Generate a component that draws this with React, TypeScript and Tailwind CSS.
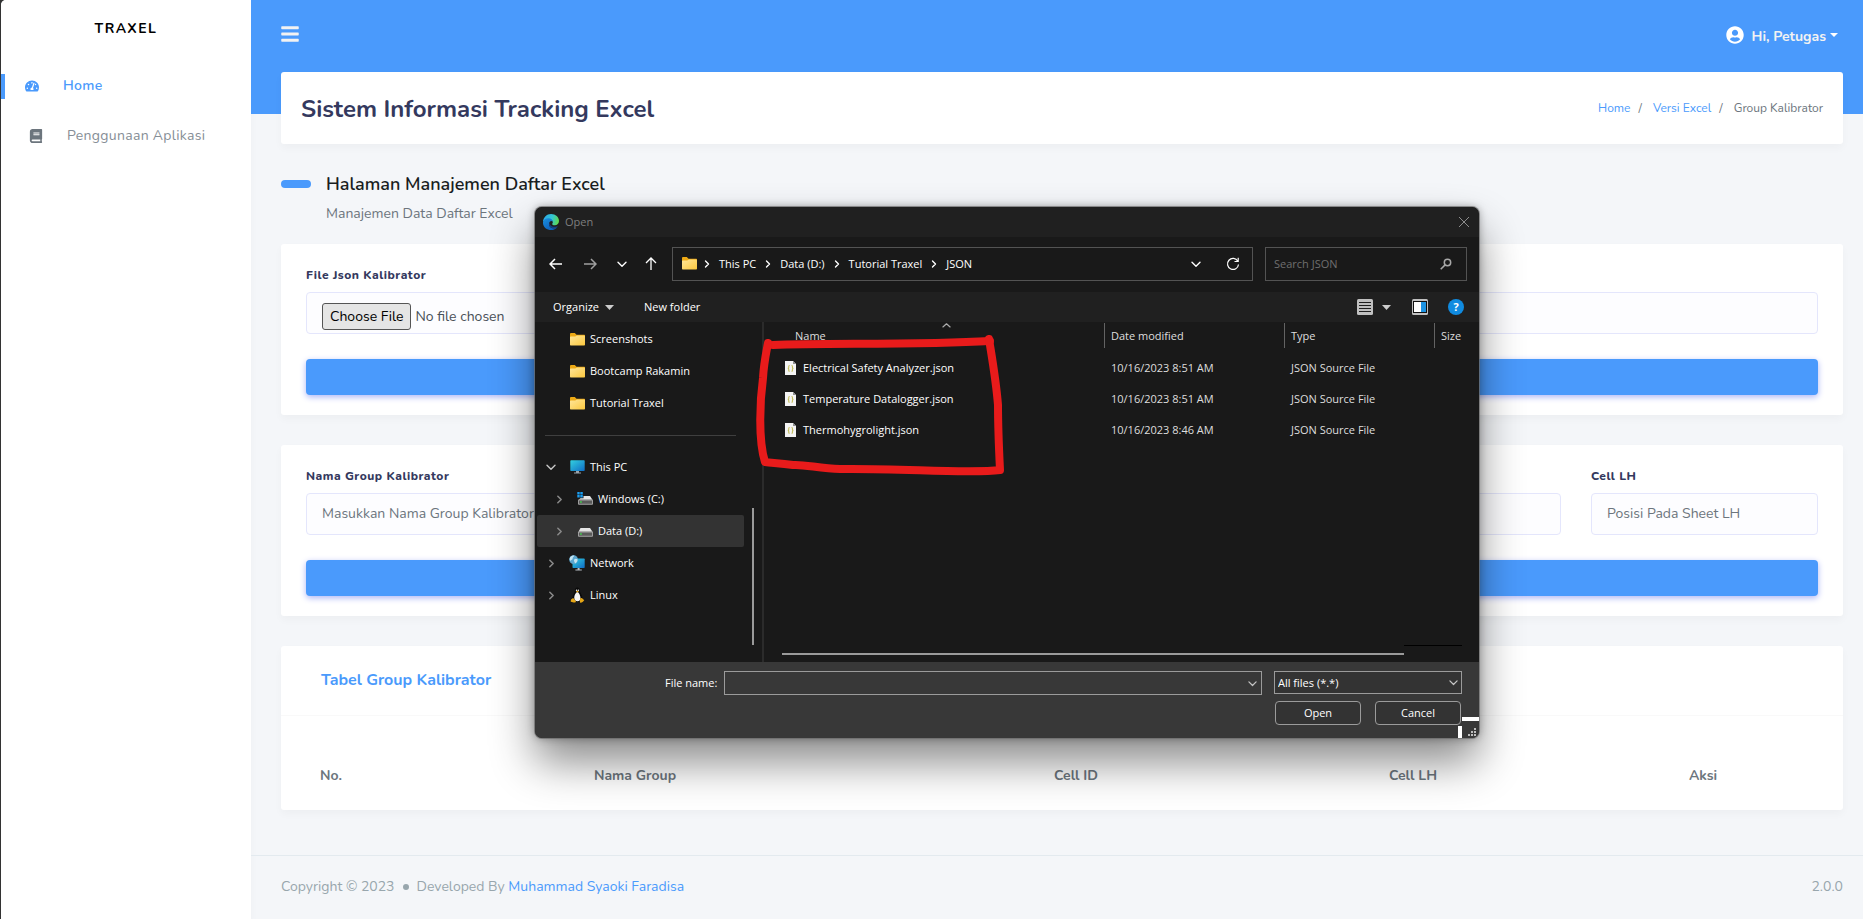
import React from 'react';
import { FaBars, FaBook, FaTachometerAlt, FaUserCircle } from 'react-icons/fa';

const label = 'block text-xs font-extrabold leading-6 tracking-[0.5px] text-[#34395e]';
const field =
  'block h-[42px] w-full rounded-[4px] border border-[#e4e6fc] bg-[#fdfdff] px-[15px] text-sm text-[#495057] outline-none placeholder:text-[#6c757d]';
const card = 'rounded-[3px] bg-white shadow-[0_4px_8px_rgba(0,0,0,0.03)]';
const primary =
  'mt-[25px] block h-9 w-full rounded-[4px] bg-[#4a9afc] shadow-[0_2px_6px_#acb5f6]';

function Chevron({ className, d }: { className: string; d: string }) {
  return (
    <svg className={className} viewBox="0 0 10 10" fill="none" stroke="currentColor" strokeWidth="1.4" strokeLinecap="round" strokeLinejoin="round">
      <path d={d} />
    </svg>
  );
}
const RIGHT = 'M3.5 2 6.5 5 3.5 8';
const DOWN = 'M1 3.2 5 7.2 9 3.2';

function EdgeLogo() {
  return (
    <svg className="size-4" viewBox="0 0 16 16">
      <defs>
        <linearGradient id="edgeTop" x1="0" y1="0.3" x2="1" y2="0.5">
          <stop offset="0" stopColor="#2aa6e6" />
          <stop offset="0.55" stopColor="#34c6d3" />
          <stop offset="1" stopColor="#5fd94e" />
        </linearGradient>
        <linearGradient id="edgeBody" x1="0" y1="0" x2="0.7" y2="1">
          <stop offset="0" stopColor="#1a8fe0" />
          <stop offset="1" stopColor="#0c5cb8" />
        </linearGradient>
      </defs>
      <path d="M0 8C.3 3.300 3.700 0 8 0c4.600 0 8 3.200 8 7 0 2.500-1.900 4.200-4.100 4.200-1.700 0-2.700-.7-2.700-1.300 0-.4.6-.7.6-1.700 0-1.500-1.400-2.700-3.300-2.700C3.600 5.500 1 6.500 0 8z" fill="url(#edgeTop)" />
      <path d="M0 8.200C.4 5.600 2.800 4.300 5.600 4.300c2.400 0 4 1.400 4.200 3.300C8.900 6.900 7.500 6.900 6.600 8c-1.500 1.900-.3 5.600 3 6.200 1.700.3 3.400-.2 4.800-1.300C13 14.900 10.700 16 8 16 3.600 16-.3 12.600 0 8.200z" fill="url(#edgeBody)" />
      <path d="M6.600 8c-1.500 1.900-.3 5.600 3 6.200 1.700.3 3.600-.3 4.900-1.500.3-.3 0-.6-.4-.4-.8.4-1.700.5-2.500.5C8.600 12.700 6 10.800 6.600 8z" fill="#123f86" />
    </svg>
  );
}

function Folder() {
  return (
    <svg className="h-[13px] w-[15px] shrink-0" viewBox="0 0 15 13">
      <defs>
        <linearGradient id="folderFront" x1="0" y1="0" x2="1" y2="1">
          <stop offset="0" stopColor="#ffe69a" />
          <stop offset="1" stopColor="#fbc83e" />
        </linearGradient>
      </defs>
      <path d="M0 1.200C0 .5.5 0 1.200 0h3.600L6.500 1.700H14c.6 0 1 .4 1 1V7H0z" fill="#eda914" />
      <path d="M0 4.200c0-.4.300-.7.700-.7h4.600L6.800 2.500H14.300c.4 0 .7.300.7.700v8.200c0 .6-.4 1-1 1H1c-.6 0-1-.4-1-1z" fill="url(#folderFront)" />
    </svg>
  );
}

function Monitor() {
  return (
    <svg className="h-[14px] w-[15px] shrink-0" viewBox="0 0 15 14">
      <defs>
        <linearGradient id="screen" x1="0" y1="0" x2="1" y2="1">
          <stop offset="0" stopColor="#33d0e0" />
          <stop offset="1" stopColor="#0f6cc4" />
        </linearGradient>
      </defs>
      <rect x="0.300" y="0.300" width="14.400" height="10.800" rx="0.800" fill="url(#screen)" />
      <path d="M6 11.100h3v1.400h2v.9H4v-.9h2z" fill="#9aa3ab" />
    </svg>
  );
}

function Drive({ windows = false }: { windows?: boolean }) {
  return (
    <svg className="h-[14px] w-4 shrink-0" viewBox="0 0 16 14">
      {windows && (
        <path d="M.3 0h2.400v2.400H.3zM3.300 0h2.500v2.400H3.300zM.3 3h2.400v2.400H.3zM3.300 3h2.500v2.400H3.300z" fill="#1a9df0" />
      )}
      <path d={windows ? 'M6.500 4h6.500l2.500 3.800H1.500L3.500 6.200h3z' : 'M3.500 4H13l2.500 3.800h-14z'} fill="#e4e4e4" />
      <rect x="1" y="7.500" width="15" height="5.200" rx="0.900" fill="#a6a6a6" />
      <rect x="1.900" y="8.400" width="13.200" height="3.400" rx="0.400" fill="#5a5a5a" />
      <rect x="3.200" y="9.200" width="1.500" height="1.600" fill="#3fdc4c" />
    </svg>
  );
}

function NetworkIcon() {
  return (
    <svg className="h-4 w-4 shrink-0" viewBox="0 0 16 16">
      <rect x="3.500" y="3.500" width="12.200" height="9.500" rx="0.700" fill="url(#screen)" />
      <path d="M8.600 13h2v1.500h2.200v.9H6.400v-.9h2.200z" fill="#b5bcc2" />
      <circle cx="4.600" cy="4.600" r="4.400" fill="#5ba6cf" />
      <path d="M1 2.500C2.200 1 4 .4 5.400.6 4.800 2 3.600 2.400 3.600 3.800c0 1.200-1.500.9-2.200 2.200C.6 5 .5 3.500 1 2.500zM5.400 4.200c1-.9 2.200-.6 3.200.2-.1 2-1.200 3.400-2.600 4C6 7 4.200 6 5.400 4.200z" fill="#c3e4f1" />
    </svg>
  );
}

function Penguin() {
  return (
    <svg className="h-4 w-[15px] shrink-0" viewBox="0 0 15 16">
      <path d="M7.300.500c-1.900 0-2.400 1.500-2.300 3.200.1 1.900-2.300 4-2.700 7.300L4 14.800h6.800l1.800-3.600C12.400 8 9.700 5.800 9.700 3.600 9.700 1.600 9 .5 7.300.5z" fill="#0a0a0a" />
      <path d="M7.400 5C5.800 5.300 4 8.500 4.300 11.200c.1 1.700 1.500 3 3.200 3s3-1.300 3-3C10.500 8.500 9 5.300 7.400 5z" fill="#f5f5f5" />
      <circle cx="6.500" cy="3.200" r="0.700" fill="#fff" />
      <circle cx="8.300" cy="3.200" r="0.700" fill="#fff" />
      <path d="M5.900 4.500 7.400 3.700l1.600.8-1.600 1.100zM3 10.800l2.900 3.400c.3 1-.9 1.700-2.300 1.300L.9 14.700c-.5-.3.100-1.100 0-1.800 0-.7.700-.5 1.100-.8zM12 10.900l1 1.300 1.200.7c.3.400-1.200 2-2.500 2.700-1.300.5-2-.3-1.800-1.500l.3-2.800z" fill="#e5a615" />
    </svg>
  );
}

function JsonFile() {
  return (
    <svg className="h-[14px] w-[11px] shrink-0" viewBox="0 0 11 14">
      <path d="M0 0h8l3 3v11H0z" fill="#f4f4f4" />
      <path d="M8 0v3h3z" fill="#8f8f8f" />
      <path d="M4.700 4.500c-1.200 0-.9.900-.9 1.700S3.400 7.300 2.900 7.400c.5.100.9.400.9 1.200s-.3 1.700.9 1.700M6.500 4.500c1.200 0 .9.900.9 1.700s.4 1.100.9 1.200c-.5.100-.9.400-.9 1.200s.3 1.700-.9 1.700" fill="none" stroke="#c3bd5c" strokeWidth="1.100" />
    </svg>
  );
}

const files = [
  ['Electrical Safety Analyzer.json', '10/16/2023 8:51 AM'],
  ['Temperature Datalogger.json', '10/16/2023 8:51 AM'],
  ['Thermohygrolight.json', '10/16/2023 8:46 AM'],
];
const places = ['Screenshots', 'Bootcamp Rakamin', 'Tutorial Traxel'];
const crumbs = ['This PC', 'Data (D:)', 'Tutorial Traxel', 'JSON'];

function FileDialog() {
  return (
    <section
      role="dialog"
      aria-label="Open"
      className="absolute left-[535px] top-[207px] flex w-[944px] flex-col overflow-hidden rounded-[7px] bg-[#191919] font-['Open_Sans','Noto_Sans',sans-serif] text-[11px] leading-4 text-white"
    >
      <div className="flex h-[30px] items-center bg-[#202020] pl-2 pr-[9px]">
        <EdgeLogo />
        <span className="ml-1.5 text-[11px] text-[#7f7f7f]">Open</span>
        <button aria-label="Close" className="ml-auto text-[#8c8c8c]">
          <svg className="size-3" viewBox="0 0 12 12" fill="none" stroke="currentColor"><path d="M1 1l10 10M11 1 1 11" /></svg>
        </button>
      </div>

      <div className="flex h-[55px] items-center pb-0.5 pl-3.5 pr-3">
        <div className="flex w-[123px] items-center">
          <button aria-label="Back">
            <svg className="h-3 w-[13px]" viewBox="0 0 13 12" fill="none" stroke="#fff" strokeWidth="1.500"><path d="M6 1 1 6l5 5M1 6h12" /></svg>
          </button>
          <button aria-label="Forward" className="ml-[22px]">
            <svg className="h-3 w-[13px]" viewBox="0 0 13 12" fill="none" stroke="#a0a0a0" strokeWidth="1.500"><path d="M7 1l5 5-5 5M12 6H0" /></svg>
          </button>
          <button aria-label="Recent locations" className="ml-5"><Chevron className="size-[10px]" d={DOWN} /></button>
          <button aria-label="Up" className="ml-[18px]">
            <svg className="h-[13px] w-3" viewBox="0 0 12 13" fill="none" stroke="#fff" strokeWidth="1.300"><path d="M1 6l5-5 5 5M6 1v12" /></svg>
          </button>
        </div>
        <div className="flex h-[34px] flex-1 items-center border border-[#535353] pl-[9px]">
          <Folder />
          {crumbs.map((c) => (
            <span key={c} className="flex items-center">
              <Chevron className="mx-[5px] size-[10px]" d={RIGHT} />
              <button className="px-0.5">{c}</button>
            </span>
          ))}
          <button aria-label="Previous locations" className="ml-auto"><Chevron className="size-[10px]" d={DOWN} /></button>
          <button aria-label="Refresh" className="ml-[25px] mr-3">
            <svg className="size-[14px]" viewBox="0 0 14 14" fill="none" stroke="#fff" strokeWidth="1.200"><path d="M11.800 4.200A5.500 5.500 0 1 0 12.500 7.500M12.200.8v3.700H8.500" /></svg>
          </button>
        </div>
        <label className="ml-3 flex h-[34px] w-[202px] items-center border border-[#535353] pl-2 pr-3.5">
          <input aria-label="Search JSON" placeholder="Search JSON" className="w-full min-w-0 bg-transparent outline-none placeholder:text-[#6f6f6f]" />
          <svg className="size-3 shrink-0" viewBox="0 0 12 12" fill="none" stroke="#a8a8a8" strokeWidth="1.500"><circle cx="7.500" cy="4.500" r="3.200" /><path d="M5.100 6.900.7 11.300" /></svg>
        </label>
      </div>

      <div className="flex h-[30px] items-center bg-[#202020] pl-[18px] pr-[15px]">
        <button className="flex items-center gap-1.5">
          Organize
          <svg className="h-[5px] w-[9px]" viewBox="0 0 9 5" fill="#ccc"><path d="M0 0h9L4.500 5z" /></svg>
        </button>
        <button className="ml-[30px]">New folder</button>
        <button aria-label="Change view" className="ml-auto flex items-center gap-[9px]">
          <svg className="size-4" viewBox="0 0 16 16"><rect width="16" height="16" rx="1.500" fill="#c0c0c0" /><path d="M2 3.500h12M2 6.500h12M2 9.500h12M2 12.500h12" stroke="#202020" /></svg>
          <svg className="h-[5px] w-[9px]" viewBox="0 0 9 5" fill="#ccc"><path d="M0 0h9L4.500 5z" /></svg>
        </button>
        <button aria-label="Preview pane" className="ml-[21px]">
          <svg className="size-4" viewBox="0 0 16 16"><rect width="16" height="16" rx="1.500" fill="#c0c0c0" /><path d="M1 2h14v12H1z" fill="#111" /><path d="M2 3h7v10H2z" fill="#fff" /><path d="M9 3h5v10H9z" fill="#1c93e3" /></svg>
        </button>
        <button aria-label="Help" className="ml-5 size-4 rounded-full bg-[#108be0] font-bold leading-4">?</button>
      </div>

      <div className="flex h-[340px]">
        <nav aria-label="Folders" className="w-[209px] pl-0.5 pt-px">
          {places.map((p) => (
            <a key={p} href="#" className="flex h-8 items-center gap-[5px] pl-[33px]"><Folder />{p}</a>
          ))}
          <div className="flex h-8 items-center pl-2"><hr className="w-[191px] border-[#3f3f3f]" /></div>
          <a href="#" className="flex h-8 items-center pl-[9px]">
            <Chevron className="mr-3.5 size-[10px] text-[#c8c8c8]" d={DOWN} /><Monitor /><span className="ml-[5px]">This PC</span>
          </a>
          <a href="#" className="flex h-8 items-center pl-[17px]">
            <Chevron className="mr-3 size-[11px] text-[#8a8a8a]" d={RIGHT} /><Drive windows /><span className="ml-[5px]">Windows (C:)</span>
          </a>
          <a href="#" className="flex h-8 items-center rounded-[2px] bg-[#333] pl-[17px]">
            <Chevron className="mr-3 size-[11px] text-[#8a8a8a]" d={RIGHT} /><Drive /><span className="ml-[5px]">Data (D:)</span>
          </a>
          <a href="#" className="flex h-8 items-center pl-[9px]">
            <Chevron className="mr-3 size-[11px] text-[#8a8a8a]" d={RIGHT} /><NetworkIcon /><span className="ml-[5px]">Network</span>
          </a>
          <a href="#" className="flex h-8 items-center pl-[9px]">
            <Chevron className="mr-[13px] size-[11px] text-[#8a8a8a]" d={RIGHT} /><Penguin /><span className="ml-[5px]">Linux</span>
          </a>
        </nav>
        <div className="flex w-[20px] flex-col items-start border-r-2 border-[#2b2b2b] pl-2 pt-[186px]">
          <div className="h-[137px] w-0.5 bg-[#9a9a9a]" />
        </div>
        <div className="flex flex-1 flex-col">
          <table className="w-full table-fixed text-left text-[#dedede]">
            <colgroup>
              <col />
              <col className="w-[180px]" />
              <col className="w-[150px]" />
              <col className="w-[45px]" />
            </colgroup>
            <thead>
              <tr>
                <th className="h-[30px] p-0 align-top font-normal">
                  <span className="relative flex h-[27px] items-center pl-[31px] pt-px">
                    Name
                    <Chevron className="absolute left-[178px] top-0 size-[9px] text-[#aaa]" d="M1 5.500 5 2l4 3.500" />
                  </span>
                </th>
                {['Date modified', 'Type', 'Size'].map((h) => (
                  <th key={h} className="h-[30px] p-0 pt-px align-top font-normal">
                    <span className="flex h-[25px] items-center border-l border-[#636363] pl-1.5">{h}</span>
                  </th>
                ))}
              </tr>
            </thead>
            <tbody>
              {files.map(([name, date]) => (
                <tr key={name} className="h-[31px]">
                  <td className="p-0"><span className="flex items-center gap-[7px] pl-[21px] text-white"><JsonFile />{name}</span></td>
                  <td className="p-0 pl-[7px]">{date}</td>
                  <td className="p-0 pl-[7px]">JSON Source File</td>
                  <td className="p-0" />
                </tr>
              ))}
            </tbody>
          </table>
          <div className="mt-auto flex h-[17px] items-start pl-[18px] pr-[17px]">
            <div className="mt-2 h-0.5 flex-1 bg-[#9a9a9a]" />
            <div className="h-px w-[58px] bg-black" />
          </div>
        </div>
      </div>

      <div className="h-[76px] bg-[#383838] pl-[130px] pr-[17px] pt-[9px]">
        <div className="flex items-start">
          <label htmlFor="file-name" className="mr-[7px] leading-6">File name:</label>
          <div className="flex h-6 flex-1 items-center border border-[#9b9b9b] pr-1">
            <input id="file-name" className="w-full min-w-0 bg-transparent px-1 outline-none" />
            <Chevron className="size-[9px] shrink-0 text-[#c4c4c4]" d={DOWN} />
          </div>
          <div className="relative ml-3 w-[188px]">
            <select aria-label="File type" className="block h-[23px] w-full appearance-none border border-[#9b9b9b] bg-[#333] pl-[3px] outline-none">
              <option>All files (*.*)</option>
            </select>
            <Chevron className="pointer-events-none absolute right-1 top-[7px] size-[9px] text-[#c4c4c4]" d={DOWN} />
          </div>
        </div>
        <div className="mt-1.5 flex justify-end gap-3.5 pr-px">
          <button className="h-6 w-[86px] rounded-[4px] border border-[#9b9b9b] bg-[#333]">Open</button>
          <button className="h-6 w-[86px] rounded-[4px] border border-[#9b9b9b] bg-[#333]">Cancel</button>
        </div>
      </div>
      <div className="absolute bottom-[17px] right-0 h-1 w-[17px] bg-white" />
      <div className="absolute bottom-0 right-[17px] h-3 w-1 bg-white" />
      <svg className="absolute bottom-0.5 right-[3px] size-2" viewBox="0 0 8 8" fill="#bdbdbd">
        <path d="M6 0h2v2H6zM6 3h2v2H6zM6 6h2v2H6zM3 3h2v2H3zM3 6h2v2H3zM0 6h2v2H0z" />
      </svg>
    </section>
  );
}

export default function App() {
  return (
    <div className="relative min-h-screen bg-[#333] pl-px font-['Nunito','Lato',sans-serif] text-sm text-[#6c757d]">
      <div className="flex min-h-screen overflow-hidden rounded-tl-[5px] bg-[#f4f6f9]">
        <aside className="w-[250px] shrink-0 bg-white shadow-[0_4px_8px_rgba(0,0,0,0.03)]">
          <a href="#" className="flex h-[57px] items-center justify-center font-bold tracking-[1.5px] text-black">TRAXEL</a>
          <nav aria-label="Main" className="pt-1">
            <a href="#" className="relative flex h-[50px] items-center pl-[17px] font-semibold tracking-[0.3px] text-[#4a9afc]">
              <span className="absolute left-0 h-[25px] w-1 bg-[#4a9afc]" />
              <span className="mr-[17px] flex w-7 justify-center"><FaTachometerAlt /></span>
              Home
            </a>
            <a href="#" className="flex h-[50px] items-center pl-[21px] font-normal tracking-[0.3px] text-[#868e96]">
              <span className="mr-[17px] flex w-7 justify-center text-[#6c757d]"><FaBook /></span>
              Penggunaan Aplikasi
            </a>
          </nav>
        </aside>

        <div className="flex min-w-0 flex-1 flex-col">
          <header className="flex h-[114px] justify-between bg-[#4a9afc] pl-[29px] pr-[25px] text-white">
            <button aria-label="Toggle menu" className="h-[68px] text-xl text-[#f2f2f2]"><FaBars /></button>
            <button className="flex h-[70px] items-center font-bold text-[#f2f2f2]">
              <FaUserCircle className="mr-2 size-[18px] text-white" />
              <span className="pt-1">Hi, Petugas</span>
              <svg className="ml-1 h-1 w-2" viewBox="0 0 8 4" fill="#fff"><path d="M0 0h8L4 4z" /></svg>
            </button>
          </header>

          <main className="relative -mt-[42px] px-[30px] pr-5">
            <div className={card + ' flex h-[72px] items-center justify-between px-5'}>
              <h1 className="pt-0.5 text-2xl font-bold text-[#34395e]">Sistem Informasi Tracking Excel</h1>
              <nav aria-label="Breadcrumb" className="flex gap-2 text-xs">
                <a href="#" className="text-[#4a9afc]">Home</a>
                <span className="mr-[3px]">/</span>
                <a href="#" className="text-[#4a9afc]">Versi Excel</a>
                <span className="mr-[3px]">/</span>
                <span>Group Kalibrator</span>
              </nav>
            </div>

            <div className="mt-7 flex items-center gap-[15px]">
              <span className="h-2 w-[30px] rounded-full bg-[#4a9afc]" />
              <h2 className="text-lg font-semibold leading-6 text-[#191d21]">Halaman Manajemen Daftar Excel</h2>
            </div>
            <p className="ml-[45px] mt-1.5 leading-6">Manajemen Data Daftar Excel</p>

            <form className={card + ' mt-[18px] px-[25px] pb-5 pt-[19px]'}>
              <label htmlFor="json" className={label}>File Json Kalibrator</label>
              <input
                id="json"
                type="file"
                className={field + ' mt-[5px] pt-2.5 file:mr-1 file:h-[27px] file:rounded-[3px] file:border file:border-solid file:border-[#555] file:bg-[#e5e5e5] file:px-[7px] file:text-black'}
              />
              <button type="button" aria-label="Import" className={primary} />
            </form>

            <form className={card + ' mt-[30px] px-[25px] pb-5 pt-[19px]'}>
              <div className="grid grid-cols-12 gap-x-[30px]">
                <div className="col-span-8">
                  <label htmlFor="nama" className={label}>Nama Group Kalibrator</label>
                  <input id="nama" placeholder="Masukkan Nama Group Kalibrator" className={field + ' mt-[5px] pb-0.5'} />
                </div>
                <div className="col-span-2">
                  <div className="h-6" />
                  <input aria-label="Cell ID" className={field + ' mt-[5px]'} />
                </div>
                <div className="col-span-2">
                  <label htmlFor="lh" className={label}>Cell LH</label>
                  <input id="lh" placeholder="Posisi Pada Sheet LH" className={field + ' mt-[5px] pb-0.5'} />
                </div>
              </div>
              <button type="button" aria-label="Tambah" className={primary} />
            </form>

            <section className={card + ' mt-[30px]'}>
              <h3 className="flex h-[70px] items-center border-b border-[#f9f9f9] px-10 pb-0.5 text-base font-bold text-[#4a9afc]">Tabel Group Kalibrator</h3>
              <div className="px-[25px] pb-1 pt-[30px]">
                <table className="w-full table-fixed">
                  <colgroup>
                    <col className="w-[50px]" />
                    <col />
                    <col className="w-[324px]" />
                    <col className="w-[350px]" />
                    <col className="w-[230px]" />
                  </colgroup>
                  <thead>
                    <tr className="h-[60px]">
                      {['No.', 'Nama Group', 'Cell ID', 'Cell LH', 'Aksi'].map((h) => (
                        <th key={h} scope="col" className="text-center font-bold">{h}</th>
                      ))}
                    </tr>
                  </thead>
                </table>
              </div>
            </section>
          </main>

          <footer className="mt-[45px] flex flex-1 justify-between border-t border-[#e3eaef] pl-[30px] pr-5 pt-[19px] leading-6 text-[#98a6ad]">
            <p className="flex items-center self-start">
              Copyright © 2023
              <span className="mx-2 size-1.5 rounded-full bg-[#98a6ad]" />
              Developed By&nbsp;<a href="#" className="text-[#4a9afc]">Muhammad Syaoki Faradisa</a>
            </p>
            <span>2.0.0</span>
          </footer>
        </div>
      </div>

      <div className="absolute left-[535px] top-[207px] h-[531px] w-[944px] rounded-[7px] shadow-[0_0_0_1px_rgba(110,110,110,0.7),0_0_8px_rgba(0,0,0,0.35),0_24px_44px_rgba(0,0,0,0.46)]" />
      <FileDialog />
      <svg className="pointer-events-none absolute left-[755px] top-[330px] h-[150px] w-[255px]" viewBox="755 330 255 150" fill="none" stroke="#e81b1b" strokeWidth="8" strokeLinecap="round" strokeLinejoin="round">
        <path d="M773 345 C830 343 920 345 990 341" />
        <path d="M989 339 C992 358 996 380 998 405 C998 430 999 450 1000 470 C970 474 900 468 840 469 C820 469 805 464 793 465 C780 463 772 463 765 462 C758 440 760 400 763 378 C764 362 766 354 768 343" />
      </svg>
    </div>
  );
}
